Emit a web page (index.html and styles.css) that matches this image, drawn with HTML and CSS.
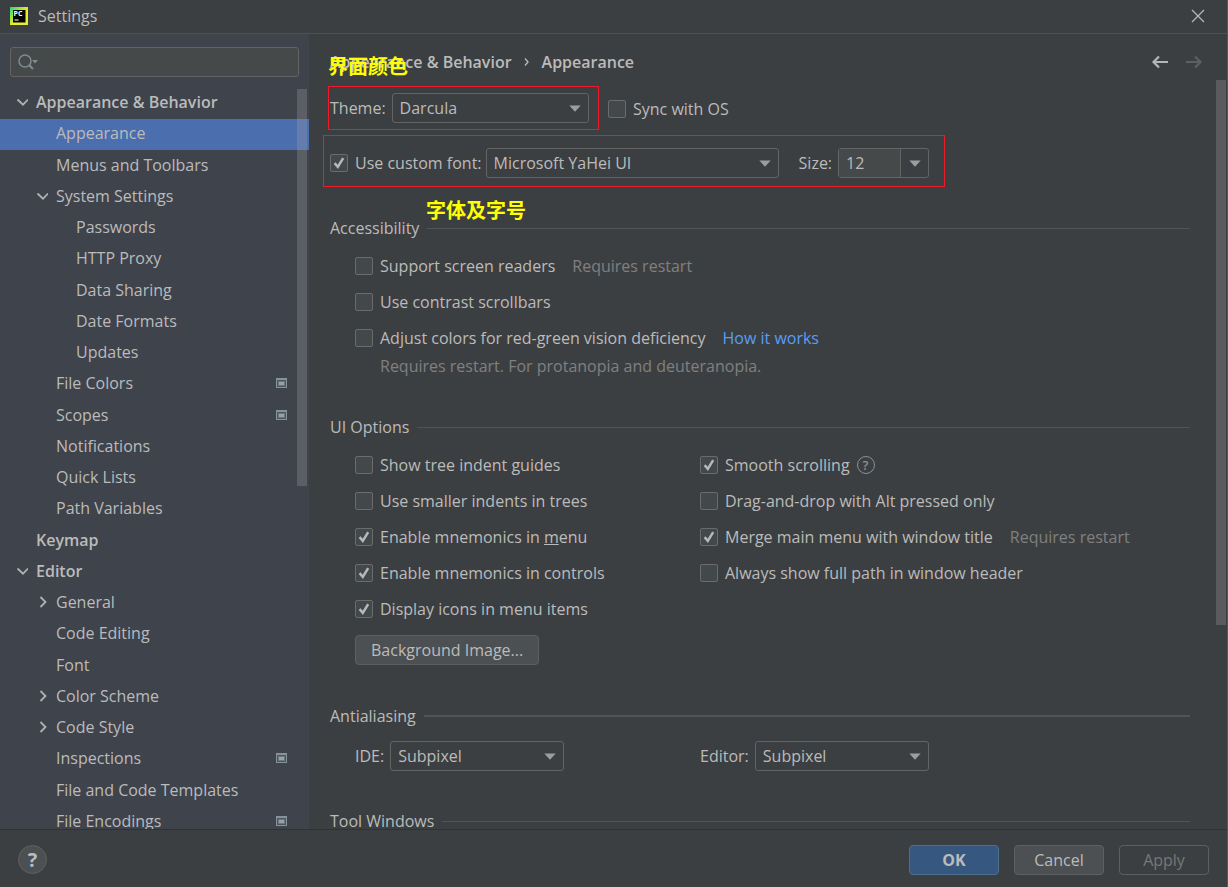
FILE: index.html
```html
<!DOCTYPE html>
<html lang="en">
<head>
<meta charset="utf-8">
<title>Settings</title>
<link rel="stylesheet" href="styles.css">
</head>
<body>
<svg class="defs" aria-hidden="true">
  <symbol id="check" viewBox="0 0 18 18"><path d="M4.600 9.200 7.800 12.800 13.200 4.200" fill="none" stroke="#b6b8ba" stroke-width="2.500"/></symbol>
  <symbol id="arrow" viewBox="0 0 12 7"><path d="M0.3 0.5h11.4L6 6.7z" fill="#9b9ea0"/></symbol>
  <symbol id="down" viewBox="0 0 12 12"><path d="M1.500 3.500 7 8.700l5-5.200" fill="none" stroke="#afb1b3" stroke-width="1.800"/></symbol>
  <symbol id="right" viewBox="0 0 12 12"><path d="M4.500 1l5 5-5 5" fill="none" stroke="#afb1b3" stroke-width="1.800"/></symbol>
  <symbol id="project" viewBox="0 0 11 10"><path d="M0 0h11v10H0z" fill="#87939a"/><path d="M1 2h9v7H1z" fill="#4d565e"/><path d="M2 3h7v5H2z" fill="#6b767e"/><path d="M3 4h5v3H3z" fill="#96a2a9"/></symbol>
</svg>
<div class="window">
  <header class="titlebar">
    <svg class="logo" viewBox="0 0 18 18" aria-hidden="true">
      <defs><linearGradient id="lg" x1="0" y1="0" x2="1" y2="1"><stop offset="0" stop-color="#21d789"/><stop offset=".35" stop-color="#a4e83a"/><stop offset=".6" stop-color="#f4ee2a"/><stop offset="1" stop-color="#d8ec3c"/></linearGradient></defs>
      <path d="M0 0h18v18H0z" fill="url(#lg)"/><path d="M3 3h12.500v12.500H3z" fill="#050505"/>
      <text class="logo-text" x="3.600" y="9">PC</text><path d="M4.500 12.500h4v1h-4z" fill="#fff"/>
    </svg>
    <span class="title">Settings</span>
    <button class="icon-button" aria-label="Close"><svg width="14" height="14" viewBox="0 0 14 14"><path d="M1 1l12 12M13 1 1 13" stroke="#b4b6b7" stroke-width="1.300" fill="none"/></svg></button>
  </header>
  <div class="body">
    <aside class="sidebar">
      <div class="search">
        <svg class="search-icon" viewBox="0 0 22 18" aria-hidden="true"><circle cx="8" cy="8" r="6" fill="none" stroke="#7f8b91" stroke-width="1.500"/><path d="M12 12l4 4" stroke="#7f8b91" stroke-width="2.200"/><path d="M15 7h6l-3 3.500z" fill="#7f8b91"/></svg>
        <input type="text" aria-label="Search settings">
      </div>
      <div class="tree-wrap">
        <ul class="tree">
          <li class="group"><svg class="chev"><use href="#down"/></svg>Appearance &amp; Behavior</li>
          <li class="l1 selected">Appearance</li>
          <li class="l1">Menus and Toolbars</li>
          <li class="l1"><svg class="chev"><use href="#down"/></svg>System Settings</li>
          <li class="l2">Passwords</li>
          <li class="l2">HTTP Proxy</li>
          <li class="l2">Data Sharing</li>
          <li class="l2">Date Formats</li>
          <li class="l2">Updates</li>
          <li class="l1">File Colors<svg class="proj"><use href="#project"/></svg></li>
          <li class="l1">Scopes<svg class="proj"><use href="#project"/></svg></li>
          <li class="l1">Notifications</li>
          <li class="l1">Quick Lists</li>
          <li class="l1">Path Variables</li>
          <li class="group">Keymap</li>
          <li class="group"><svg class="chev"><use href="#down"/></svg>Editor</li>
          <li class="l1"><svg class="chev"><use href="#right"/></svg>General</li>
          <li class="l1">Code Editing</li>
          <li class="l1">Font</li>
          <li class="l1"><svg class="chev"><use href="#right"/></svg>Color Scheme</li>
          <li class="l1"><svg class="chev"><use href="#right"/></svg>Code Style</li>
          <li class="l1">Inspections<svg class="proj"><use href="#project"/></svg></li>
          <li class="l1">File and Code Templates</li>
          <li class="l1">File Encodings<svg class="proj"><use href="#project"/></svg></li>
        </ul>
        <div class="thumb tree-thumb"></div>
      </div>
    </aside>
    <main class="panel">
      <div class="panel-head">
        <span class="crumb">Appearance &amp; Behavior</span>
        <svg class="crumb-sep" viewBox="0 0 6 10" aria-hidden="true"><path d="M1 1.500 4 5 1 8.500" fill="none" stroke="#bbb" stroke-width="1.300"/></svg>
        <span class="crumb">Appearance</span>
        <span class="note note-theme" lang="zh">界面颜色</span>
        <span class="nav">
          <button class="icon-button" aria-label="Back"><svg width="18" height="14" viewBox="0 0 18 14"><path d="M17 7H2.500M8 1.500 2.500 7 8 12.500" fill="none" stroke="#b4b6b8" stroke-width="2.200"/></svg></button>
          <button class="icon-button" aria-label="Forward" disabled><svg width="18" height="14" viewBox="0 0 18 14"><path d="M1 7h14.500M10 1.500 15.500 7 10 12.500" fill="none" stroke="#5d6062" stroke-width="2.200"/></svg></button>
        </span>
      </div>
      <div class="scroll">
        <div class="row theme-row">
          <div class="field marked-theme">
            <label for="theme">Theme:</label>
            <span class="select w-theme"><select id="theme"><option>Darcula</option></select><svg><use href="#arrow"/></svg></span>
          </div>
          <label class="check sync"><span class="box"><input type="checkbox"><svg><use href="#check"/></svg></span>Sync with OS</label>
        </div>
        <div class="row font-row">
          <label class="check"><span class="box"><input type="checkbox" checked><svg><use href="#check"/></svg></span>Use custom font:</label>
          <span class="select w-font"><select aria-label="Font"><option>Microsoft YaHei UI</option></select><svg><use href="#arrow"/></svg></span>
          <label class="size-label" for="size">Size:</label>
          <span class="combo"><input id="size" type="text" value="12"><button aria-label="Choose size"><svg><use href="#arrow"/></svg></button></span>
          <span class="note note-font" lang="zh">字体及字号</span>
        </div>

        <section class="section first">
          <h2>Accessibility</h2>
          <div class="opt"><label class="check"><span class="box"><input type="checkbox"><svg><use href="#check"/></svg></span>Support screen readers</label><span class="hint">Requires restart</span></div>
          <div class="opt"><label class="check"><span class="box"><input type="checkbox"><svg><use href="#check"/></svg></span>Use contrast scrollbars</label></div>
          <div class="opt"><label class="check"><span class="box"><input type="checkbox"><svg><use href="#check"/></svg></span>Adjust colors for red-green vision deficiency</label><a class="hint" href="#">How it works</a></div>
          <p class="subhint">Requires restart. For protanopia and deuteranopia.</p>
        </section>

        <section class="section">
          <h2>UI Options</h2>
          <div class="cols">
            <div>
              <div class="opt"><label class="check"><span class="box"><input type="checkbox"><svg><use href="#check"/></svg></span>Show tree indent guides</label></div>
              <div class="opt"><label class="check"><span class="box"><input type="checkbox"><svg><use href="#check"/></svg></span>Use smaller indents in trees</label></div>
              <div class="opt"><label class="check"><span class="box"><input type="checkbox" checked><svg><use href="#check"/></svg></span><span>Enable mnemonics in <u>m</u>enu</span></label></div>
              <div class="opt"><label class="check"><span class="box"><input type="checkbox" checked><svg><use href="#check"/></svg></span>Enable mnemonics in controls</label></div>
              <div class="opt"><label class="check"><span class="box"><input type="checkbox" checked><svg><use href="#check"/></svg></span>Display icons in menu items</label></div>
              <button class="btn image-btn">Background Image...</button>
            </div>
            <div>
              <div class="opt"><label class="check"><span class="box"><input type="checkbox" checked><svg><use href="#check"/></svg></span>Smooth scrolling</label>
                <span class="help-small">?</span></div>
              <div class="opt"><label class="check"><span class="box"><input type="checkbox"><svg><use href="#check"/></svg></span>Drag-and-drop with Alt pressed only</label></div>
              <div class="opt"><label class="check"><span class="box"><input type="checkbox" checked><svg><use href="#check"/></svg></span>Merge main menu with window title</label><span class="hint">Requires restart</span></div>
              <div class="opt"><label class="check"><span class="box"><input type="checkbox"><svg><use href="#check"/></svg></span>Always show full path in window header</label></div>
            </div>
          </div>
        </section>

        <section class="section">
          <h2 class="thick">Antialiasing</h2>
          <div class="cols aa">
            <div class="field"><label for="aa-ide">IDE:</label><span class="select w-aa"><select id="aa-ide"><option>Subpixel</option></select><svg><use href="#arrow"/></svg></span></div>
            <div class="field"><label for="aa-editor">Editor:</label><span class="select w-aa"><select id="aa-editor"><option>Subpixel</option></select><svg><use href="#arrow"/></svg></span></div>
          </div>
        </section>

        <section class="section tight">
          <h2>Tool Windows</h2>
        </section>
        <div class="thumb panel-thumb"></div>
      </div>
    </main>
  </div>
  <footer class="footer">
    <button class="help" aria-label="Help">?</button>
    <div class="actions">
      <button class="btn primary">OK</button>
      <button class="btn">Cancel</button>
      <button class="btn" disabled>Apply</button>
    </div>
  </footer>
</div>
</body>
</html>
```
FILE: styles.css
```css
*, *::before, *::after { box-sizing: border-box; }
body {
  margin: 0;
  background: #3c3f41;
  color: #bbbbbb;
  font: 16px/24px "Open Sans", "Noto Sans", sans-serif;
}
button, input, select { font: inherit; color: inherit; margin: 0; }
.defs { position: absolute; width: 0; height: 0; }
.window {
  height: 100vh;
  display: flex;
  flex-direction: column;
  border-right: 1px solid #57595b;
  overflow: hidden;
}

.titlebar {
  flex: none;
  height: 34px;
  padding: 0 22px 2px 10px;
  display: flex;
  align-items: center;
  gap: 10px;
  border-bottom: 1px solid #515151;
}
.logo { width: 18px; height: 18px; }
.logo-text { font: bold 7px "Open Sans", sans-serif; fill: #fff; }
.title { flex: 1; }
.icon-button { border: 0; padding: 0; background: none; display: flex; }

.body { flex: 1; min-height: 0; display: flex; }
.sidebar {
  flex: none;
  width: 309px;
  background: #3f434c;
  display: flex;
  flex-direction: column;
}
.search {
  margin: 13px 10px 11px;
  height: 30px;
  display: flex;
  align-items: center;
  background: #45494a;
  border: 1px solid #646464;
  border-radius: 3px;
}
.search-icon { width: 22px; height: 18px; margin-left: 6px; }
.search input { flex: 1; min-width: 0; border: 0; background: none; outline: 0; }
.tree-wrap { flex: 1; min-height: 0; position: relative; overflow: hidden; }
.tree { list-style: none; margin: 0; padding: 0; }
.tree li {
  height: 31px;
  display: flex;
  align-items: center;
  padding-right: 22px;
  padding-bottom: 3px;
}
.tree li:nth-child(4n+3) { height: 32px; padding-bottom: 2px; }
.tree .group { padding-left: 36px; font-weight: 600; }
.tree .l1 { padding-left: 56px; }
.tree .l2 { padding-left: 76px; }
.tree .selected { background: #4b6eaf; }
.chev { width: 12px; height: 12px; margin-left: -20px; margin-right: 8px; }
.proj { width: 11px; height: 10px; margin-left: auto; }
.thumb { position: absolute; width: 10px; background: rgba(166, 166, 166, 0.28); }
.tree-thumb { top: 1px; right: 2px; height: 397px; }

.panel { flex: 1; min-width: 0; display: flex; flex-direction: column; }
.panel-head {
  flex: none;
  position: relative;
  display: flex;
  align-items: center;
  padding: 16px 24px 6px 21px;
}
.crumb { font-weight: 600; }
.crumb-sep { width: 6px; height: 10px; margin: 0 12px; }
.nav { margin-left: auto; display: flex; gap: 16px; }
.note {
  position: absolute;
  font: bold 20px/24px "Noto Sans CJK SC", sans-serif;
  color: #ffff00;
  white-space: nowrap;
}
.note-theme { left: 19px; top: 20px; }
.note-font { left: 96px; top: 63px; }

.scroll {
  flex: 1;
  min-height: 0;
  position: relative;
  overflow: hidden;
  padding: 6px 37px 0 21px;
}
.panel-thumb { top: 0; right: 1px; height: 545px; }
.row { position: relative; display: flex; align-items: center; }
.theme-row { height: 44px; }
.sync { padding-top: 2px; }
.font-row { height: 56px; margin-top: 5px; }
.marked-theme { width: 271px; height: 44px; margin-left: -2px; margin-right: 9px; padding-left: 1px; border: 1px solid #ed1c24; }
.font-row::before {
  content: "";
  position: absolute;
  left: -7px;
  top: 0;
  width: 622px;
  height: 52px;
  border: 1px solid #ed1c24;
}
.field { display: flex; align-items: center; gap: 6px; }
.check { display: flex; align-items: center; gap: 7px; }
.box { position: relative; display: flex; width: 18px; height: 18px; flex: none; }
.box input {
  appearance: none;
  width: 18px;
  height: 18px;
  background: #43494a;
  border: 1px solid #6b6b6b;
  border-radius: 2px;
}
.box svg { position: absolute; inset: 0; width: 18px; height: 18px; display: none; pointer-events: none; }
.box input:checked + svg { display: block; }
.select { position: relative; display: flex; height: 30px; }
.select select {
  appearance: none;
  width: 100%;
  background: #3c3f41;
  border: 1px solid #646464;
  border-radius: 3px;
  padding: 0 7px;
}
.select svg { position: absolute; right: 8px; top: 12px; width: 12px; height: 7px; pointer-events: none; }
.w-theme { width: 197px; }
.w-font { width: 293px; margin-left: 4px; }
.w-aa { width: 174px; }
.size-label { margin-left: 20px; margin-right: 6px; }
.combo {
  display: flex;
  width: 91px;
  height: 30px;
  border: 1px solid #646464;
  border-radius: 3px;
}
.combo input { width: 62px; border: 0; border-right: 1px solid #646464; background: #45494a; padding: 0 7px; }
.combo button { flex: 1; border: 0; background: none; padding: 0; display: flex; align-items: center; justify-content: center; }
.combo svg { width: 12px; height: 7px; }

.section { margin-top: 39px; }
.section.first { margin-top: 25px; }
.section.tight { margin-top: 33px; }
h2 { margin: 0 0 8px; font-size: 16px; font-weight: normal; display: flex; align-items: center; gap: 8px; }
h2::after { content: ""; flex: 1; height: 1px; background: #515355; }
h2.thick::after { height: 2px; }
.opt { height: 36px; margin-left: 25px; display: flex; align-items: center; }
.hint { margin-left: 17px; color: #808080; }
a.hint { color: #589df6; text-decoration: none; }
.subhint { margin: 0 0 0 50px; line-height: 20px; color: #808080; }
.cols { display: grid; grid-template-columns: 370px 1fr; }
.cols > div + div .opt { margin-left: 0; }
.aa { height: 40px; align-items: center; }
.aa .field:first-child { margin-left: 25px; }
.help-small {
  width: 18px;
  height: 18px;
  margin-left: 7px;
  border: 1px solid #8a9194;
  border-radius: 50%;
  font-size: 13px;
  font-weight: 600;
  line-height: 16px;
  text-align: center;
  color: #8a9194;
}

.btn {
  min-width: 90px;
  height: 30px;
  padding: 0 15px;
  border: 1px solid #5e6060;
  border-radius: 4px;
  background: #4c5052;
  line-height: 24px;
}
.image-btn { margin: 8px 0 0 25px; }
.primary { background: #365880; border-color: #4c708c; font-weight: bold; }
.btn:disabled { background: none; color: #777777; }

.footer {
  flex: none;
  height: 58px;
  padding: 2px 18px 0;
  display: flex;
  align-items: center;
  justify-content: space-between;
  border-top: 1px solid #323232;
}
.help {
  width: 29px;
  height: 29px;
  padding: 0;
  border: 1px solid #5e6060;
  border-radius: 50%;
  background: #4c5052;
  font-size: 20px;
  font-weight: bold;
  line-height: 24px;
}
.actions { display: flex; gap: 15px; }
```
